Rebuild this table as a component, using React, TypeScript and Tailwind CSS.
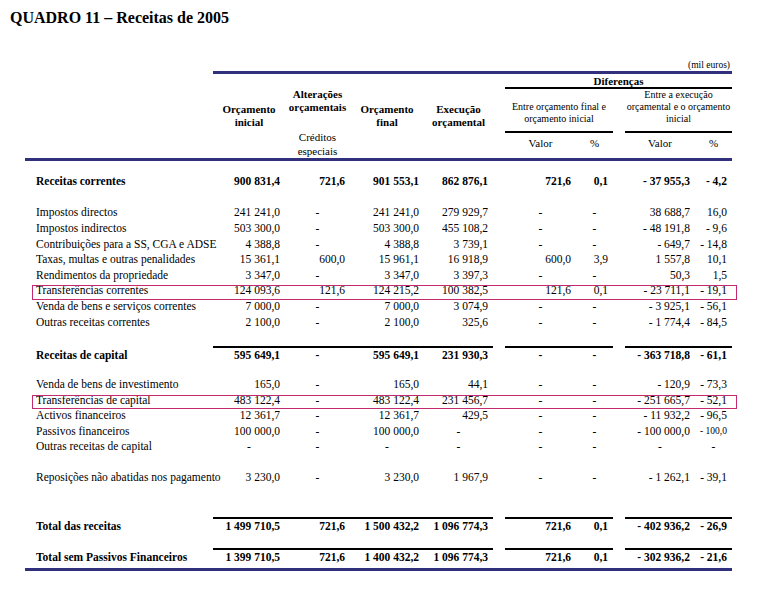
import React from "react";

type Row = {
  label: string;
  v: string[];
  bold?: boolean;
  box?: boolean;
  rule?: boolean;
} | null;

const cols = "grid grid-cols-[188px_72px_65px_74px_69px_12px_71px_37px_12px_70px_37px]";

const rows: Row[] = [
  { label: "Receitas correntes", bold: true, v: ["900 831,4", "721,6", "901 553,1", "862 876,1", "721,6", "0,1", "- 37 955,3", "- 4,2"] },
  null,
  { label: "Impostos directos", v: ["241 241,0", "-", "241 241,0", "279 929,7", "-", "-", "38 688,7", "16,0"] },
  { label: "Impostos indirectos", v: ["503 300,0", "-", "503 300,0", "455 108,2", "-", "-", "- 48 191,8", "- 9,6"] },
  { label: "Contribuições para a SS, CGA e ADSE", v: ["4 388,8", "-", "4 388,8", "3 739,1", "-", "-", "- 649,7", "- 14,8"] },
  { label: "Taxas, multas e outras penalidades", v: ["15 361,1", "600,0", "15 961,1", "16 918,9", "600,0", "3,9", "1 557,8", "10,1"] },
  { label: "Rendimentos da propriedade", v: ["3 347,0", "-", "3 347,0", "3 397,3", "-", "-", "50,3", "1,5"] },
  { label: "Transferências correntes", box: true, v: ["124 093,6", "121,6", "124 215,2", "100 382,5", "121,6", "0,1", "- 23 711,1", "- 19,1"] },
  { label: "Venda de bens e serviços correntes", v: ["7 000,0", "-", "7 000,0", "3 074,9", "-", "-", "- 3 925,1", "- 56,1"] },
  { label: "Outras receitas correntes", v: ["2 100,0", "-", "2 100,0", "325,6", "-", "-", "- 1 774,4", "- 84,5"] },
  null,
  { label: "Receitas de capital", bold: true, rule: true, v: ["595 649,1", "-", "595 649,1", "231 930,3", "-", "-", "- 363 718,8", "- 61,1"] },
  null,
  { label: "Venda de bens de investimento", v: ["165,0", "-", "165,0", "44,1", "-", "-", "- 120,9", "- 73,3"] },
  { label: "Transferências de capital", box: true, v: ["483 122,4", "-", "483 122,4", "231 456,7", "-", "-", "- 251 665,7", "- 52,1"] },
  { label: "Activos financeiros", v: ["12 361,7", "-", "12 361,7", "429,5", "-", "-", "- 11 932,2", "- 96,5"] },
  { label: "Passivos financeiros", v: ["100 000,0", "-", "100 000,0", "-", "-", "-", "- 100 000,0", "- 100,0"] },
  { label: "Outras receitas de capital", v: ["-", "-", "-", "-", "-", "-", "-", "-"] },
  null,
  { label: "Reposições não abatidas nos pagamento", v: ["3 230,0", "-", "3 230,0", "1 967,9", "-", "-", "- 1 262,1", "- 39,1"] },
  null,
  null,
  { label: "Total das receitas", bold: true, rule: true, v: ["1 499 710,5", "721,6", "1 500 432,2", "1 096 774,3", "721,6", "0,1", "- 402 936,2", "- 26,9"] },
  null,
  { label: "Total sem Passivos Financeiros", bold: true, rule: true, v: ["1 399 710,5", "721,6", "1 400 432,2", "1 096 774,3", "721,6", "0,1", "- 302 936,2", "- 21,6"] },
];

function Cell({ value, rule }: { value: string; rule?: boolean }) {
  const dash = value === "-";
  const small = value === "- 100,0";
  return (
    <div
      className={`h-full whitespace-nowrap ${rule ? "border-t-2 border-black" : ""} ${
        dash ? "text-center" : "text-right pr-[5px]"
      } ${small ? "text-[9.5px]" : ""}`}
    >
      {value}
    </div>
  );
}

function DataRow({ row }: { row: Row }) {
  if (!row) return <div className="h-[15.6px]" />;
  const [a, b, c, d, e, f, g, h] = row.v;
  return (
    <div className={`${cols} relative h-[15.6px] leading-[15.6px] ${row.bold ? "font-bold" : ""}`}>
      <div className={`pl-[11px] whitespace-nowrap ${row.rule ? "pt-[2px]" : ""}`}>{row.label}</div>
      <Cell value={a} rule={row.rule} />
      <Cell value={b} rule={row.rule} />
      <Cell value={c} rule={row.rule} />
      <Cell value={d} rule={row.rule} />
      <div />
      <Cell value={e} rule={row.rule} />
      <Cell value={f} rule={row.rule} />
      <div />
      <Cell value={g} rule={row.rule} />
      <Cell value={h} rule={row.rule} />
      {row.box && (
        <span className="absolute left-[7px] right-[-5px] top-[2px] bottom-[-1px] border border-[#c42a6f]" />
      )}
    </div>
  );
}

export default function App() {
  return (
    <div className="min-h-[602px] w-[775px] bg-white text-black font-['Liberation_Serif',serif]">
      {/* Title */}
      <div className="pl-[10px] pt-[9px] text-[16px] leading-[18px] font-bold">
        QUADRO 11 – Receitas de 2005
      </div>

      <div className="ml-[25px] w-[707px]">
        <div className="mt-[32px] text-right pr-[2px] text-[9.5px] leading-[12px]">(mil euros)</div>
        <div className="ml-[188px] h-[3px] bg-[#30307c]" />

        {/* Header */}
        <div className={`${cols} h-[84px] text-[11px]`}>
          <div />
          <div className="pt-[28.5px] text-center font-bold leading-[13px]">
            Orçamento
            <br />
            inicial
          </div>
          <div className="flex flex-col items-center pt-[13.5px] leading-[13px] whitespace-nowrap">
            <div className="font-bold">Alterações</div>
            <div className="font-bold">orçamentais</div>
            <div className="mt-[16.5px] leading-[14px] text-center">
              Créditos
              <br />
              especiais
            </div>
          </div>
          <div className="pt-[28.5px] text-center font-bold leading-[13px]">
            Orçamento
            <br />
            final
          </div>
          <div className="pt-[28.5px] text-center font-bold leading-[13px] whitespace-nowrap">
            Execução
            <br />
            orçamental
          </div>
          <div />
          <div className="col-span-5 flex flex-col">
            <div className="h-[15px] pt-[1px] border-b-2 border-black text-center font-bold leading-[13px]">
              Diferenças
            </div>
            <div className="grid grid-cols-[108px_12px_107px] h-[41px] text-[10px] leading-[12px]">
              <div className="flex flex-col justify-end items-center pb-[6px] border-b-2 border-black whitespace-nowrap">
                <div>Entre orçamento final e</div>
                <div>orçamento inicial</div>
              </div>
              <div />
              <div className="flex flex-col justify-end items-center pb-[6px] border-b-2 border-black whitespace-nowrap">
                <div>Entre a execução</div>
                <div>orçamental e o orçamento</div>
                <div>inicial</div>
              </div>
            </div>
            <div className="grid grid-cols-[71px_37px_12px_70px_37px] pt-[6.5px] leading-[13px]">
              <div className="text-center">Valor</div>
              <div className="text-center">%</div>
              <div />
              <div className="text-center">Valor</div>
              <div className="text-center">%</div>
            </div>
          </div>
        </div>
        <div className="h-[3px] bg-[#30307c]" />

        {/* Body */}
        <div className="mt-[13.2px] text-[11.5px]">
          {rows.map((r, i) => (
            <DataRow key={i} row={r} />
          ))}
        </div>
        <div className="mt-[4.3px] h-[3px] bg-[#30307c]" />
      </div>
    </div>
  );
}
